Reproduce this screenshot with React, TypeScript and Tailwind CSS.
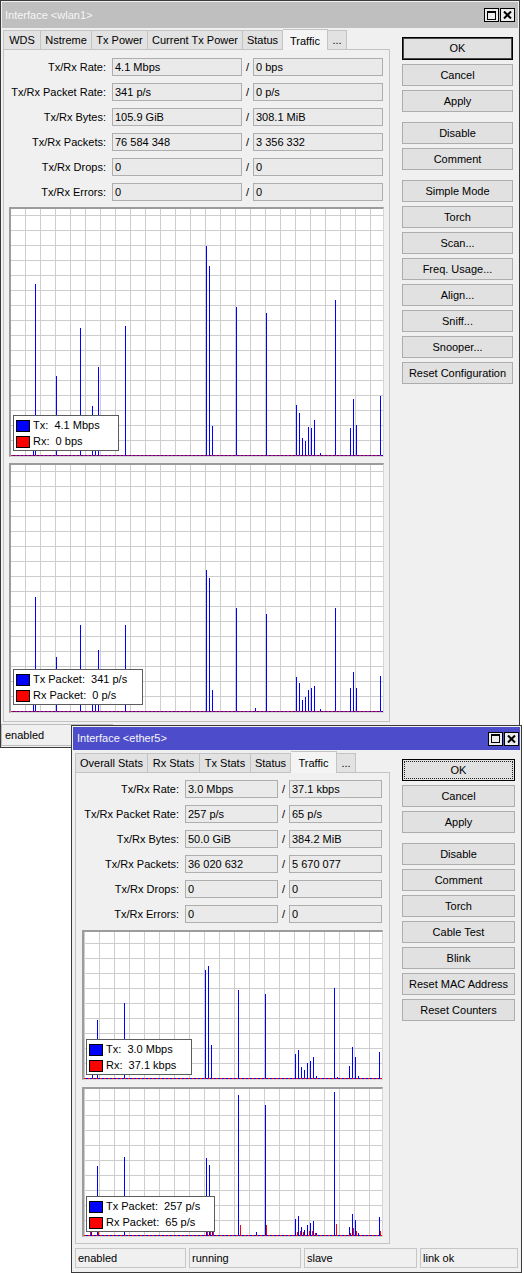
import React from "react";

type Pt = [number, number];

function WinBtn({ kind }: { kind: "max" | "close" }) {
  return (
    <div className="w-[15px] h-[14px] border border-black bg-[#ececec] flex items-center justify-center">
      {kind === "max" ? (
        <svg width="9" height="9" viewBox="0 0 9 9" shapeRendering="crispEdges">
          <rect x="0.5" y="0.5" width="8" height="8" fill="none" stroke="#000" />
          <rect x="0" y="0" width="9" height="2" fill="#000" />
        </svg>
      ) : (
        <svg width="9" height="8" viewBox="0 0 9 8">
          <path d="M1 0.5 L8 7.5 M8 0.5 L1 7.5" stroke="#000" strokeWidth="2" />
        </svg>
      )}
    </div>
  );
}

function TitleBar({ title, active, pr }: { title: string; active: boolean; pr: string }) {
  return (
    <div
      className={
        "mx-[1px] mt-[1px] shrink-0 flex items-center justify-between " +
        (active ? "h-[23px] bg-[#4d4dcb] pl-[4px] " : "h-[26px] bg-[#bfbfbf] pl-[3px] ") +
        pr
      }
    >
      <span className="text-[11px] text-[#f6f6f6]">{title}</span>
      <div className="flex gap-[1px]">
        <WinBtn kind="max" />
        <WinBtn kind="close" />
      </div>
    </div>
  );
}

function Tabs({ tabs, sel, h }: { tabs: [string, string][]; sel: number; h: string }) {
  return (
    <div className={"flex items-end " + h}>
      {tabs.map(([t, w], i) =>
        i === sel ? (
          <div
            key={i}
            className={
              w +
              " h-full bg-[#f4f4f4] border-t border-r border-[#c3c3c3] flex items-start pt-[3px] justify-center text-[11px] relative z-10 -mb-px pb-px" +
              (i === 0 ? " border-l" : "")
            }
          >
            {t}
          </div>
        ) : (
          <div
            key={i}
            className={
              w +
              " h-[19px] bg-[#e2e2e2] border-t border-r border-[#c3c3c3] flex items-center justify-center text-[11px]" +
              (i === 0 ? " border-l" : "")
            }
          >
            {t}
          </div>
        )
      )}
    </div>
  );
}

function Row({
  label,
  a,
  b,
  lw,
  fw,
}: {
  label: string;
  a: string;
  b: string;
  lw: string;
  fw: string;
}) {
  return (
    <div className="flex h-[18px] items-center text-[11px]">
      <div className={lw + " text-right"}>{label}</div>
      <div className={fw + " ml-[6px] h-full border border-[#aeaeae] bg-[#eaeaea] flex items-center pl-[2px]"}>{a}</div>
      <div className="w-[11px] pl-[4px]">/</div>
      <div className={fw + " h-full border border-[#aeaeae] bg-[#eaeaea] flex items-center pl-[2px]"}>{b}</div>
    </div>
  );
}

function Chart({
  ox,
  oy,
  w,
  h,
  blue,
  red = [],
  goff,
}: {
  ox: number;
  oy: number;
  w: number;
  h: number;
  blue: Pt[];
  red?: Pt[];
  goff: number;
}) {
  const vl: number[] = [];
  for (let x = goff; x < w; x += 15) vl.push(x);
  const hl: number[] = [];
  for (let y = h - 1 - 15; y >= 0; y -= 15) hl.push(y);
  return (
    <svg width={w} height={h} className="block" shapeRendering="crispEdges">
      <rect width={w} height={h} fill="#ffffff" />
      {vl.map((x) => (
        <rect key={"v" + x} x={x} y={0} width={1} height={h} fill="#cdcdcd" />
      ))}
      {hl.map((y) => (
        <rect key={"h" + y} x={0} y={y} width={w} height={1} fill="#cdcdcd" />
      ))}
      {blue.map(([px, py], i) => (
        <rect key={"b" + i} x={Math.round(px - ox)} y={py - oy} width={1} height={h - (py - oy)} fill="#0000ff" />
      ))}
      {red.map(([px, py], i) => (
        <rect key={"r" + i} x={Math.round(px - ox)} y={py - oy} width={1} height={h - (py - oy)} fill="#ff0000" />
      ))}
      <line x1={0} x2={w} y1={h - 0.5} y2={h - 0.5} stroke="#0000ff" strokeWidth={1} />
      <line x1={0} x2={w} y1={h - 0.5} y2={h - 0.5} stroke="#ff0000" strokeWidth={1} strokeDasharray="2 2" />
    </svg>
  );
}

function Legend({ rows, cls }: { rows: [string, string][]; cls: string }) {
  return (
    <div className={"absolute left-[2px] h-[36px] bg-white border border-[#5c5c5c] pl-[2px] pt-[4px] flex flex-col gap-[5px] " + cls}>
      {rows.map(([c, t], i) => (
        <div key={i} className="flex items-center gap-[3px] h-[11px]">
          <div className={"w-[14px] h-[12px] border border-black " + c} />
          <span className="text-[11px] whitespace-pre leading-none">{t}</span>
        </div>
      ))}
    </div>
  );
}

function Graph({
  outer,
  children,
}: {
  outer: string;
  children: React.ReactNode;
}) {
  return (
    <div
      className={
        "relative border-t-2 border-l-2 border-r border-b border-t-[#9c9c9c] border-l-[#9c9c9c] border-r-[#d6d6d6] border-b-[#d6d6d6] " +
        outer
      }
    >
      {children}
    </div>
  );
}

function Btn({ t, kind }: { t: string; kind?: "def" | "focus" }) {
  if (kind === "focus")
    return (
      <div className="h-[22px] border border-black bg-[#e1e1e1] p-[1px]">
        <div className="h-full border border-dotted border-[#222] flex items-center justify-center text-[11px]">{t}</div>
      </div>
    );
  if (kind === "def")
    return (
      <div className="h-[23px] border border-black shadow-[inset_0_0_0_1px_#4a4a4a] bg-[#e1e1e1] flex items-center justify-center text-[11px]">
        {t}
      </div>
    );
  return (
    <div className="h-[22px] border border-[#adadad] bg-[#e1e1e1] flex items-center justify-center text-[11px]">{t}</div>
  );
}

function Buttons({ groups, w, first }: { groups: string[][]; w: string; first: "def" | "focus" }) {
  return (
    <div className={"pl-[12px] pt-[9px] flex flex-col gap-[10px] " + w}>
      {groups.map((g, gi) => (
        <div key={gi} className="flex flex-col gap-[4px]">
          {g.map((t, i) => (
            <Btn key={t} t={t} kind={gi === 0 && i === 0 ? first : undefined} />
          ))}
        </div>
      ))}
    </div>
  );
}

const rows1: [string, string, string][] = [
  ["Tx/Rx Rate:", "4.1 Mbps", "0 bps"],
  ["Tx/Rx Packet Rate:", "341 p/s", "0 p/s"],
  ["Tx/Rx Bytes:", "105.9 GiB", "308.1 MiB"],
  ["Tx/Rx Packets:", "76 584 348", "3 356 332"],
  ["Tx/Rx Drops:", "0", "0"],
  ["Tx/Rx Errors:", "0", "0"],
];
const rows2: [string, string, string][] = [
  ["Tx/Rx Rate:", "3.0 Mbps", "37.1 kbps"],
  ["Tx/Rx Packet Rate:", "257 p/s", "65 p/s"],
  ["Tx/Rx Bytes:", "50.0 GiB", "384.2 MiB"],
  ["Tx/Rx Packets:", "36 020 632", "5 670 077"],
  ["Tx/Rx Drops:", "0", "0"],
  ["Tx/Rx Errors:", "0", "0"],
];

const w1g1: Pt[] = [
  [33, 440], [35, 284], [56, 376], [80, 328], [92, 406], [95, 440], [98, 367], [125, 326],
  [206, 246], [209, 266], [212, 426], [236, 307], [266, 313], [296, 405], [299, 413], [302, 438],
  [305, 441], [308, 427], [311, 428], [314, 420], [320, 453], [335, 300], [350, 428], [353, 399],
  [356, 425], [380, 396],
];
const w1g2: Pt[] = [
  [33, 690], [35, 597], [56, 657], [80, 625], [92, 682], [95, 700], [98, 650], [125, 625],
  [206, 570], [209, 578], [212, 690], [236, 608], [255, 708], [266, 614], [296, 677], [299, 683],
  [302, 700], [305, 697], [308, 690], [311, 688], [314, 686], [320, 709], [335, 608], [350, 688],
  [353, 672], [356, 688], [380, 676],
];
const w2g1: Pt[] = [
  [92, 1065], [97, 1020], [124, 1003], [205, 970], [208, 966], [211, 1045], [238, 990], [265, 994],
  [295, 1054], [298, 1050], [301, 1067], [304, 1070], [307, 1063], [310, 1061], [313, 1057], [316, 1076],
  [334, 988], [337, 1077], [349, 1066], [352, 1047], [355, 1057], [358, 1076], [379, 1052],
];
const w2g2b: Pt[] = [
  [91, 1225], [97, 1166], [124, 1157], [206, 1158], [209, 1165], [212, 1200], [238, 1095], [256, 1232],
  [265, 1105], [295, 1219], [298, 1216], [301, 1227], [304, 1230], [307, 1225], [310, 1223], [313, 1221],
  [316, 1233], [334, 1092], [349, 1227], [352, 1214], [355, 1220], [358, 1233], [379, 1217],
];
const w2g2r: Pt[] = [
  [90, 1231], [98, 1232], [207, 1229], [210, 1229], [213, 1229], [240, 1225], [266, 1225], [297, 1232],
  [300, 1231], [303, 1232], [309, 1231], [312, 1231], [315, 1233], [336, 1224], [350, 1233], [353, 1228],
  [356, 1231], [380, 1231],
];

export default function App() {
  return (
    <div className="relative w-[524px] h-[1273px] bg-white overflow-hidden font-['Liberation_Sans',Arial,sans-serif] text-black">
      {/* Window 1 */}
      <div className="absolute left-0 top-0 w-[520px] h-[748px] border border-[#3a3a3a] bg-[#f0f0f0] flex flex-col">
        <TitleBar title="Interface <wlan1>" active={false} pr="pr-[3px]" />
        <div className="flex">
          <div className="ml-[2px] flex flex-col">
            <Tabs
              h="h-[21px]"
              sel={5}
              tabs={[
                ["WDS", "w-[38px]"],
                ["Nstreme", "w-[51px]"],
                ["Tx Power", "w-[56px]"],
                ["Current Tx Power", "w-[95px]"],
                ["Status", "w-[40px]"],
                ["Traffic", "w-[45px]"],
                ["...", "w-[19px]"],
              ]}
            />
            <div className="w-[387px] h-[673px] border border-[#c3c3c3] pt-[8px] flex flex-col">
              <div className="flex flex-col gap-[7px]">
                {rows1.map(([l, a, b]) => (
                  <Row key={l} label={l} a={a} b={b} lw="w-[102px]" fw="w-[130px]" />
                ))}
              </div>
              <Graph outer="ml-[5px] mt-[6px] w-[375px] h-[250px]">
                <Chart ox={11} oy={209} w={372} h={247} blue={w1g1} goff={14} />
                <Legend
                  cls="bottom-[5px] w-[106px]"
                  rows={[
                    ["bg-[#0000ff]", "Tx:  4.1 Mbps"],
                    ["bg-[#ff0000]", "Rx:  0 bps"],
                  ]}
                />
              </Graph>
              <Graph outer="ml-[5px] mt-[6px] w-[375px] h-[250px]">
                <Chart ox={11} oy={465} w={372} h={247} blue={w1g2} goff={14} />
                <Legend
                  cls="bottom-[7px] w-[130px]"
                  rows={[
                    ["bg-[#0000ff]", "Tx Packet:  341 p/s"],
                    ["bg-[#ff0000]", "Rx Packet:  0 p/s"],
                  ]}
                />
              </Graph>
            </div>
          </div>
          <Buttons
            w="w-[123px]"
            first="def"
            groups={[
              ["OK", "Cancel", "Apply"],
              ["Disable", "Comment"],
              ["Simple Mode", "Torch", "Scan...", "Freq. Usage...", "Align...", "Sniff...", "Snooper...", "Reset Configuration"],
            ]}
          />
        </div>
        <div className="mt-[2px] h-[22px] flex">
          <div className="w-[112px] h-full border border-[#bdbdbd] flex items-center pl-[3px] text-[11px]">enabled</div>
        </div>
      </div>

      {/* Window 2 */}
      <div className="absolute left-[71px] top-[725px] w-[451px] h-[548px] border border-[#3a3a3a] bg-[#f0f0f0] flex flex-col">
        <TitleBar title="Interface <ether5>" active={true} pr="pr-[1px]" />
        <div className="flex">
          <div className="ml-[3px] flex flex-col">
            <Tabs
              h="h-[22px]"
              sel={4}
              tabs={[
                ["Overall Stats", "w-[73px]"],
                ["Rx Stats", "w-[52px]"],
                ["Tx Stats", "w-[51px]"],
                ["Status", "w-[40px]"],
                ["Traffic", "w-[46px]"],
                ["...", "w-[19px]"],
              ]}
            />
            <div className="w-[315px] h-[472px] border border-[#c3c3c3] pt-[7px] flex flex-col">
              <div className="flex flex-col gap-[7px]">
                {rows2.map(([l, a, b]) => (
                  <Row key={l} label={l} a={a} b={b} lw="w-[103px]" fw="w-[93px]" />
                ))}
              </div>
              <Graph outer="ml-[6px] mt-[7px] w-[301px] h-[150px]">
                <Chart ox={84} oy={932} w={298} h={147} blue={w2g1} goff={0} />
                <Legend
                  cls="bottom-[4px] w-[106px]"
                  rows={[
                    ["bg-[#0000ff]", "Tx:  3.0 Mbps"],
                    ["bg-[#ff0000]", "Rx:  37.1 kbps"],
                  ]}
                />
              </Graph>
              <Graph outer="ml-[6px] mt-[7px] w-[301px] h-[150px]">
                <Chart ox={84} oy={1089} w={298} h={147} blue={w2g2b} red={w2g2r} goff={0} />
                <Legend
                  cls="bottom-[4px] w-[129px]"
                  rows={[
                    ["bg-[#0000ff]", "Tx Packet:  257 p/s"],
                    ["bg-[#ff0000]", "Rx Packet:  65 p/s"],
                  ]}
                />
              </Graph>
            </div>
          </div>
          <Buttons
            w="w-[125px]"
            first="focus"
            groups={[
              ["OK", "Cancel", "Apply"],
              ["Disable", "Comment", "Torch", "Cable Test", "Blink", "Reset MAC Address", "Reset Counters"],
            ]}
          />
        </div>
        <div className="mt-[4px] ml-[3px] h-[20px] flex gap-[3px] text-[11px]">
          <div className="w-[111px] h-full border border-[#c6c6c6] flex items-center pl-[2px]">enabled</div>
          <div className="w-[112px] h-full border border-[#c6c6c6] flex items-center pl-[2px]">running</div>
          <div className="w-[113px] h-full border border-[#c6c6c6] flex items-center pl-[2px]">slave</div>
          <div className="w-[98px] h-full border border-[#c6c6c6] flex items-center pl-[2px]">link ok</div>
        </div>
      </div>
    </div>
  );
}
